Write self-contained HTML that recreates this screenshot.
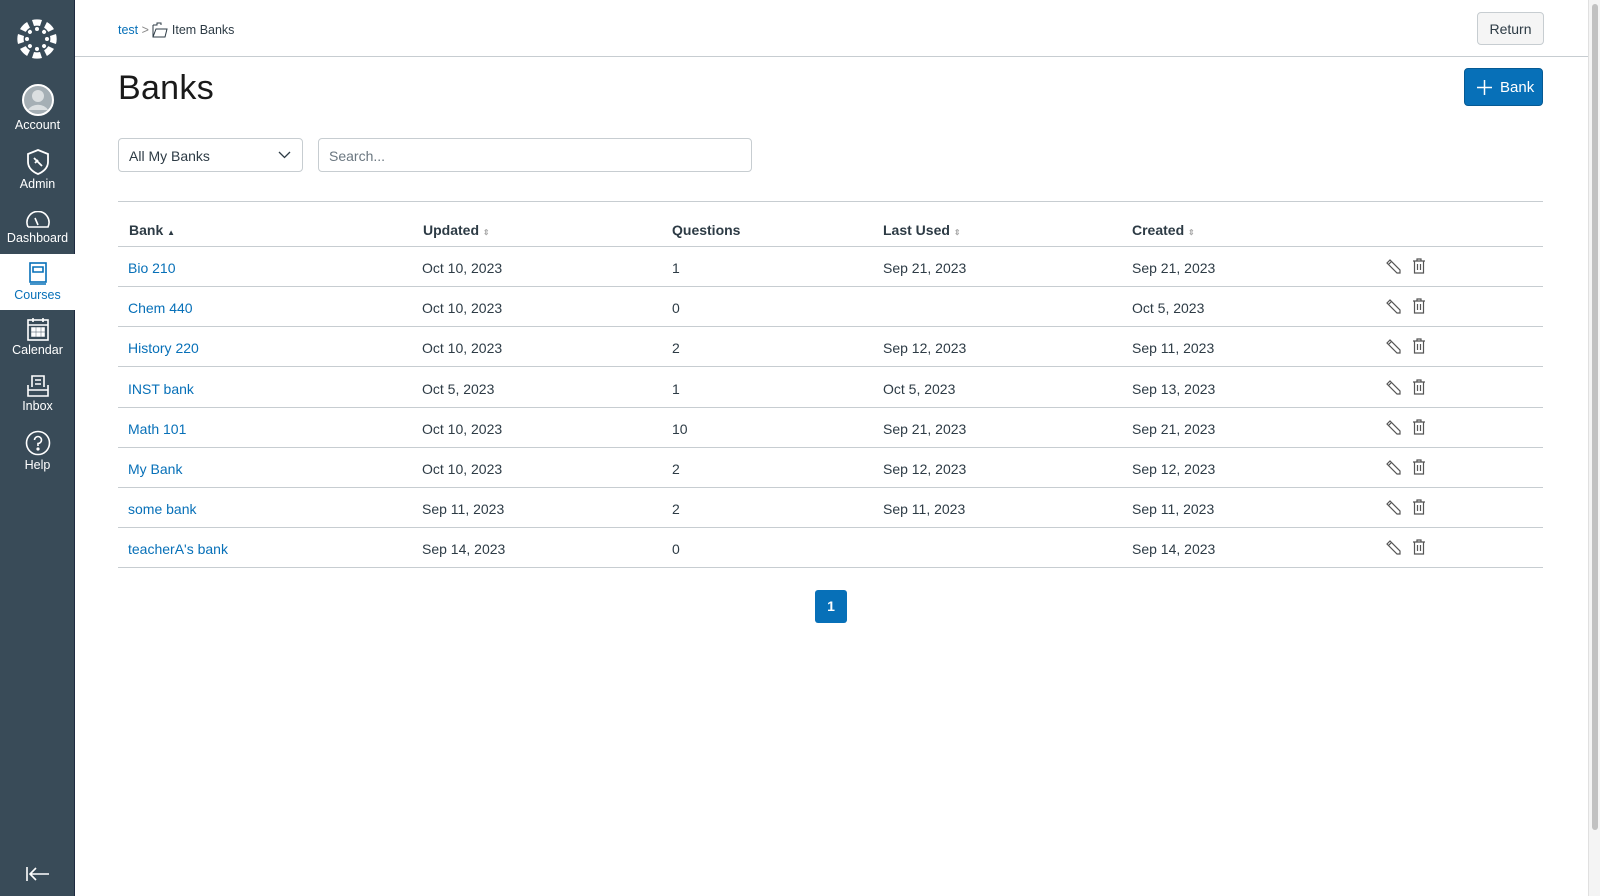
<!DOCTYPE html>
<html><head><meta charset="utf-8"><style>
*{box-sizing:border-box;margin:0;padding:0}
body{width:1600px;height:896px;overflow:hidden;background:#fff;font-family:"Liberation Sans",sans-serif;color:#2d3b45;position:relative}
.side{position:absolute;left:0;top:0;width:75px;height:896px;background:#394b58;border-right:1px solid #1e2a40}
.nav{position:absolute;left:0;width:75px;text-align:center;color:#fff;font-size:12.5px}
.nav svg{display:block;margin:0 auto 2px}
.act{background:#fff;color:#0770b8}
.top{position:absolute;left:75px;right:12px;top:0;height:57px;border-bottom:1px solid #c7cdd1}
.sb{position:absolute;right:0;top:0;width:12px;height:896px;background:#f4f4f4;border-left:1px solid #e0e0e0}
.sb div{position:absolute;left:3px;top:4px;width:6px;height:826px;border-radius:3px;background:#c1c1c1}
a{color:#0770b8;text-decoration:none}
.row{position:absolute;left:118px;width:1425px;height:40px;border-bottom:1px solid #c7cdd1;font-size:14px}
.row span{position:absolute;top:13px}
.hd span{font-weight:bold;top:15px}
.ic{position:absolute;top:11px}
</style></head><body>
<div class="side">
  <svg style="position:absolute;left:17px;top:19px" width="40" height="40" viewBox="-20 -20 40 40" fill="#fff">
    <g id="p"><path d="M-5,-19 A19,19 0 0 1 5,-19 L3,-13 A13,13 0 0 0 -3,-13Z"/><circle cx="0" cy="-10" r="2"/></g>
    <use href="#p" transform="rotate(45)"/><use href="#p" transform="rotate(90)"/><use href="#p" transform="rotate(135)"/><use href="#p" transform="rotate(180)"/><use href="#p" transform="rotate(225)"/><use href="#p" transform="rotate(270)"/><use href="#p" transform="rotate(315)"/>
  </svg>
  <div class="nav" style="top:84px"><svg width="32" height="32" viewBox="0 0 32 32"><circle cx="16" cy="16" r="15" fill="#a5afb5" stroke="#fff" stroke-width="2"/><circle cx="16" cy="12" r="6" fill="#fff" opacity=".6"/><path d="M6,26 A11,9 0 0 1 26,26" fill="#fff" opacity=".6"/></svg>Account</div>
  <div class="nav" style="top:149px"><svg width="24" height="26" viewBox="0 0 24 26" fill="none" stroke="#fff" stroke-width="1.8"><path d="M12,1 L22,5 V13 C22,19 17,23 12,25 C7,23 2,19 2,13 V5Z"/><path d="M8,9 L16,17 M9,14 l3,-3"/></svg>Admin</div>
  <div class="nav" style="top:211px"><svg width="26" height="18" viewBox="0 0 26 18" fill="none" stroke="#fff" stroke-width="1.6"><path d="M3,16 A11,11 0 1 1 23,16 H3"/><path d="M13,14 L10,7"/></svg>Dashboard</div>
  <div class="nav act" style="top:254px;height:56px;padding-top:8px"><svg width="20" height="24" viewBox="0 0 20 24" fill="none" stroke="#0770b8" stroke-width="1.6"><rect x="2" y="1" width="16" height="19"/><path d="M5,5 H15 V10 H5Z M2,22 H18"/></svg>Courses</div>
  <div class="nav" style="top:317px"><svg width="22" height="24" viewBox="0 0 22 24" fill="none" stroke="#fff" stroke-width="1.6"><rect x="1" y="3" width="20" height="20"/><path d="M1,8 H21 M6,1 V5 M16,1 V5"/><path d="M5,11h3v3h-3zM10,11h3v3h-3zM15,11h2v3h-2zM5,16h3v3h-3zM10,16h3v3h-3zM15,16h2v3h-2z" fill="#fff"/></svg>Calendar</div>
  <div class="nav" style="top:375px"><svg width="24" height="22" viewBox="0 0 24 22" fill="none" stroke="#fff" stroke-width="1.6"><path d="M6,12 V1 H18 V12 M2,10 V21 H22 V10 M9,5 H15 M9,9 H15 M2,15 H22"/></svg>Inbox</div>
  <div class="nav" style="top:430px"><svg width="26" height="26" viewBox="0 0 26 26" fill="none" stroke="#fff" stroke-width="1.6"><circle cx="13" cy="13" r="11.5"/><path d="M9.5,10 A3.5,3.5 0 1 1 13,13.5 V16"/><circle cx="13" cy="19" r="0.8" fill="#fff"/></svg>Help</div>
  <svg style="position:absolute;left:26px;top:866px" width="24" height="16" viewBox="0 0 24 16" stroke="#fff" stroke-width="1.6" fill="none"><path d="M1,1 V15 M23,8 H4 M10,2 L4,8 L10,14"/></svg>
</div>
<div class="top">
  <div style="position:absolute;left:43px;top:22px;font-size:12.5px"><a>test</a> <span style="color:#888">&gt;</span>
  <svg width="16" height="16" viewBox="0 0 16 16" fill="none" stroke="#2d3b45" stroke-width="1" style="vertical-align:-4px"><path d="M1,3 H5 V1 H9 V3 M1,3 V15 H13 L15,7 H4 L1,15"/></svg> Item Banks</div>
  <div style="position:absolute;left:1402px;top:12px;width:67px;height:33px;border:1px solid #c7cdd1;border-radius:4px;background:#f5f5f5;font-size:14px;text-align:center;line-height:33px">Return</div>
</div>
<div style="position:absolute;left:118px;top:69px;font-size:34px;font-weight:normal;color:#1a1a1a;letter-spacing:0.3px">Banks</div>
<div style="position:absolute;left:1464px;top:68px;width:79px;height:38px;background:#0770b8;border:1px solid #065a94;border-radius:4px;color:#fff;font-size:15px;line-height:38px;padding-left:35px">Bank
<svg style="position:absolute;left:12px;top:11px" width="15" height="15" stroke="#fff" stroke-width="1.5"><path d="M7.5,0V15M0,7.5H15"/></svg></div>
<div style="position:absolute;left:118px;top:138px;width:185px;height:34px;border:1px solid #c7cdd1;border-radius:4px;font-size:14px;line-height:34px;padding-left:10px">All My Banks
<svg style="position:absolute;right:11px;top:12px" width="13" height="8" fill="none" stroke="#2d3b45" stroke-width="1.3"><path d="M1,1 L6.5,6.5 L12,1"/></svg></div>
<div style="position:absolute;left:318px;top:138px;width:434px;height:34px;border:1px solid #c7cdd1;border-radius:4px;font-size:14px;line-height:34px;padding-left:10px;color:#6b7780">Search...</div>
<div style="position:absolute;left:118px;top:201px;width:1425px;border-top:1px solid #c7cdd1"></div>
<div class="row hd" style="top:207px"><span style="left:11px">Bank <small style="font-size:8px">▲</small></span><span style="left:305px">Updated <small style="font-size:8px;color:#aaa">⇕</small></span><span style="left:554px">Questions</span><span style="left:765px">Last Used <small style="font-size:8px;color:#aaa">⇕</small></span><span style="left:1014px">Created <small style="font-size:8px;color:#aaa">⇕</small></span></div>
<div id="rows"></div>
<div style="position:absolute;left:815px;top:590px;width:32px;height:33px;background:#0770b8;border-radius:3px;color:#fff;font-weight:bold;font-size:14px;text-align:center;line-height:33px">1</div>
<div class="sb"><div></div></div>
<script>
var d=[["Bio 210","Oct 10, 2023","1","Sep 21, 2023","Sep 21, 2023"],["Chem 440","Oct 10, 2023","0","","Oct 5, 2023"],["History 220","Oct 10, 2023","2","Sep 12, 2023","Sep 11, 2023"],["INST bank","Oct 5, 2023","1","Oct 5, 2023","Sep 13, 2023"],["Math 101","Oct 10, 2023","10","Sep 21, 2023","Sep 21, 2023"],["My Bank","Oct 10, 2023","2","Sep 12, 2023","Sep 12, 2023"],["some bank","Sep 11, 2023","2","Sep 11, 2023","Sep 11, 2023"],["teacherA's bank","Sep 14, 2023","0","","Sep 14, 2023"]];
var h="";d.forEach(function(r,i){h+='<div class="row" style="top:'+(247+i*40.2)+'px"><span style="left:10px"><a>'+r[0]+'</a></span><span style="left:304px">'+r[1]+'</span><span style="left:554px">'+r[2]+'</span><span style="left:765px">'+r[3]+'</span><span style="left:1014px">'+r[4]+'</span>'+
'<svg class="ic" style="left:1267px" width="16" height="16" fill="none" stroke="#555" stroke-width="1.2"><path d="M2,5 L5,2 L15,12 L15,15 L12,15Z M3.5,6.5 L6.5,3.5"/></svg>'+
'<svg class="ic" style="left:1294px" width="14" height="16" fill="none" stroke="#555" stroke-width="1.2"><path d="M1,3 H13 M5,3 V1 H9 V3 M2.5,3 V15 H11.5 V3 M5.5,6 V12 M8.5,6 V12"/></svg></div>'});
document.getElementById("rows").innerHTML=h;
</script>
</body></html>
